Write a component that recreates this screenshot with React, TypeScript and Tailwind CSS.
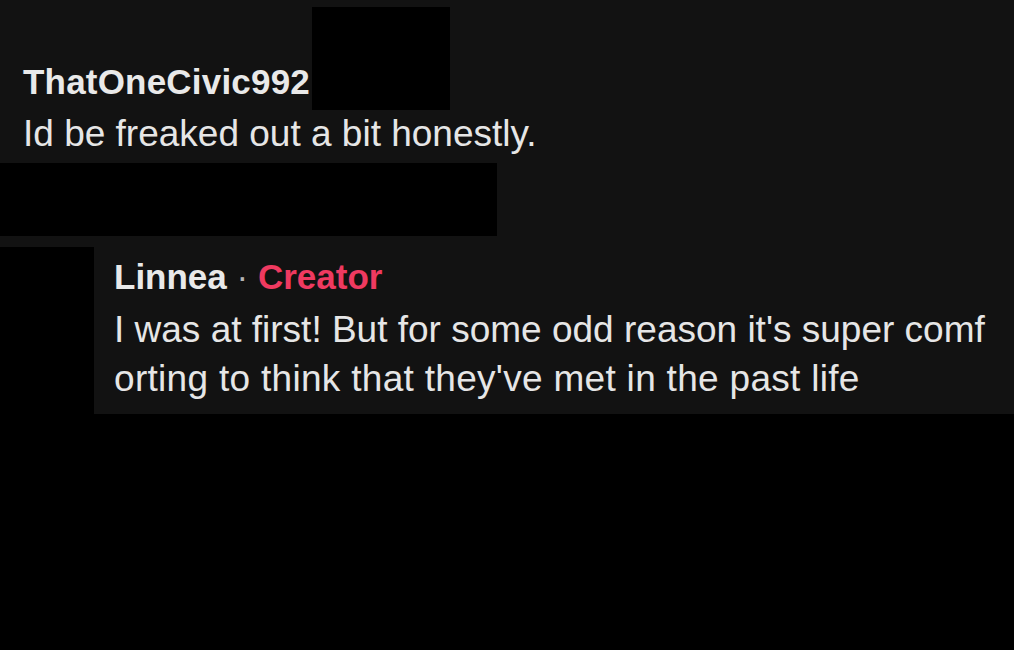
const font = { fontFamily: '"Liberation Sans", Arial, sans-serif' }

function Redacted({ className }: { className: string }) {
  return <div className={`bg-black shrink-0 ${className}`} />
}

export default function App() {
  return (
    <div className="w-[1014px] h-[650px] bg-black overflow-hidden" style={font}>
      <div className="bg-[#121212] pb-[11px]">
        {/* top comment */}
        <div className="flex items-start pl-[23px] pt-[7px]">
          <span className="mt-[57px] text-[35px] leading-[36px] font-bold tracking-[0.2px] text-[#e9e9e9] whitespace-nowrap">
            ThatOneCivic992
          </span>
          <Redacted className="w-[138px] h-[103px] ml-[2px]" />
        </div>
        <p className="mt-[4px] pl-[23px] text-[37px] leading-[40px] text-[#e6e6e6] whitespace-nowrap">
          Id be freaked out a bit honestly.
        </p>
        <Redacted className="mt-[9px] w-[497px] h-[73px]" />

        {/* reply */}
        <div className="mt-[11px] flex">
          <Redacted className="w-[94px] self-stretch -mb-[11px]" />
          <div className="pl-[20px] pt-[12px]">
            <div className="text-[35px] leading-[36px] font-bold whitespace-nowrap">
              <span className="text-[#e9e9e9]">Linnea</span>
              <span className="text-[#b5b5b5] font-normal"> · </span>
              <span className="text-[#ef3a60]">Creator</span>
            </div>
            <div className="mt-[10px] text-[37px] leading-[49px] text-[#e6e6e6] whitespace-nowrap">
              <div>I was at first! But for some odd reason it's super comf</div>
              <div className="tracking-[0.3px]">orting to think that they've met in the past life</div>
            </div>
          </div>
        </div>
      </div>
    </div>
  )
}
